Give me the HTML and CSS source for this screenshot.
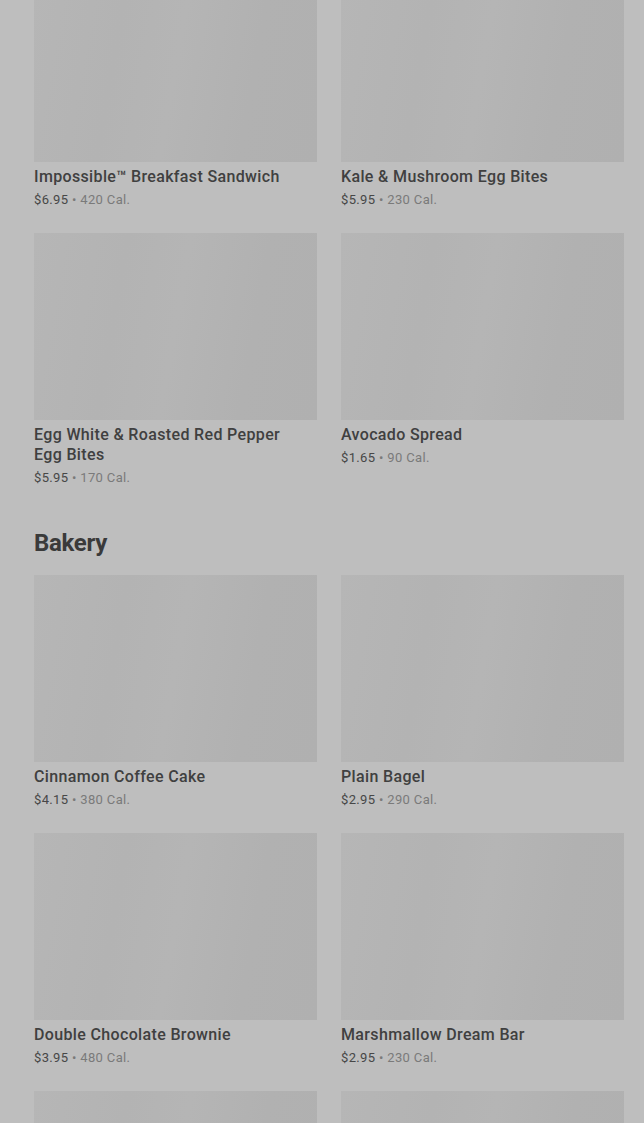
FILE: index.html
```html
<!DOCTYPE html>
<html lang="en">
<head>
<meta charset="utf-8">
<title>Menu</title>
<link rel="stylesheet" href="styles.css">
</head>
<body>
<main class="page">
  <section class="section section-first">
    <div class="grid">
      <article class="item">
        <div class="thumb"></div>
        <h3 class="name">Impossible™ Breakfast Sandwich</h3>
        <p class="meta"><span class="price">$6.95</span> • 420 Cal.</p>
      </article>
      <article class="item">
        <div class="thumb"></div>
        <h3 class="name">Kale &amp; Mushroom Egg Bites</h3>
        <p class="meta"><span class="price">$5.95</span> • 230 Cal.</p>
      </article>
      <article class="item">
        <div class="thumb"></div>
        <h3 class="name">Egg White &amp; Roasted Red Pepper Egg Bites</h3>
        <p class="meta"><span class="price">$5.95</span> • 170 Cal.</p>
      </article>
      <article class="item">
        <div class="thumb"></div>
        <h3 class="name">Avocado Spread</h3>
        <p class="meta"><span class="price">$1.65</span> • 90 Cal.</p>
      </article>
    </div>
  </section>

  <section class="section">
    <h2 class="section-title">Bakery</h2>
    <div class="grid">
      <article class="item">
        <div class="thumb"></div>
        <h3 class="name">Cinnamon Coffee Cake</h3>
        <p class="meta"><span class="price">$4.15</span> • 380 Cal.</p>
      </article>
      <article class="item">
        <div class="thumb"></div>
        <h3 class="name">Plain Bagel</h3>
        <p class="meta"><span class="price">$2.95</span> • 290 Cal.</p>
      </article>
      <article class="item">
        <div class="thumb"></div>
        <h3 class="name">Double Chocolate Brownie</h3>
        <p class="meta"><span class="price">$3.95</span> • 480 Cal.</p>
      </article>
      <article class="item">
        <div class="thumb"></div>
        <h3 class="name">Marshmallow Dream Bar</h3>
        <p class="meta"><span class="price">$2.95</span> • 230 Cal.</p>
      </article>
      <article class="item">
        <div class="thumb"></div>
      </article>
      <article class="item">
        <div class="thumb"></div>
      </article>
    </div>
  </section>
</main>
</body>
</html>
```
FILE: styles.css
```css
html, body {
  margin: 0;
  padding: 0;
  background: #bebebe;
  overflow: hidden;
}

body {
  font-family: Roboto, "Liberation Sans", Arial, sans-serif;
  color: #3b3b3b;
  -webkit-font-smoothing: antialiased;
}

.page {
  padding: 0 20px 0 34px;
  margin-top: -25px;
}

.section + .section {
  margin-top: 40px;
}

.section-title {
  margin: 0 0 16px;
  font-size: 24px;
  line-height: 32px;
  font-weight: 700;
  letter-spacing: -0.3px;
  color: #3a3a3a;
}

.grid {
  display: grid;
  grid-template-columns: 1fr 1fr;
  column-gap: 24px;
  row-gap: 24px;
}

.item {
  display: flex;
  flex-direction: column;
  min-width: 0;
}

.thumb {
  height: 187px;
  background: linear-gradient(100deg, #b6b6b6 0%, #b3b3b3 30%, #b5b5b5 50%, #b1b1b1 75%, #b0b0b0 100%);
}

.name {
  margin: 5px 0 0;
  font-size: 16px;
  line-height: 20px;
  font-weight: 500;
  letter-spacing: 0.35px;
  color: #404040;
  padding-right: 20px;
}

.meta {
  margin: 4px 0 0;
  font-size: 13px;
  line-height: 18px;
  letter-spacing: 0.35px;
  color: #7a7a7a;
}

.price {
  color: #474747;
}
```
